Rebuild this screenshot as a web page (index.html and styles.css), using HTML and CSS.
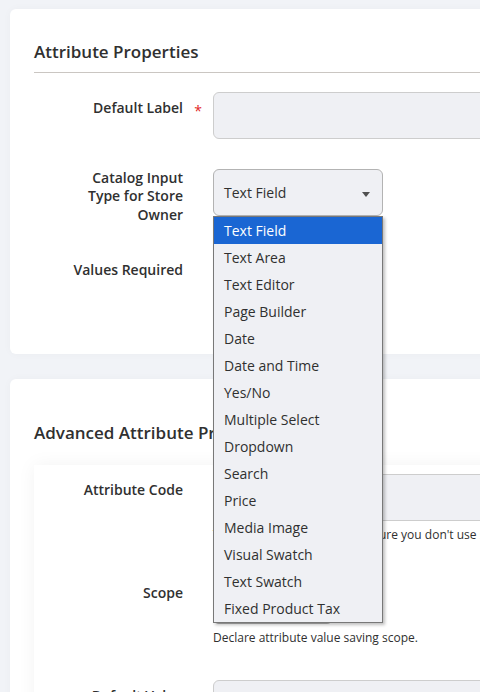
FILE: index.html
```html
<!DOCTYPE html>
<html lang="en">
<head>
    <meta charset="UTF-8">
    <meta name="viewport" content="width=device-width, initial-scale=1.0">
    <title>New Product Attribute</title>
    <link rel="stylesheet" href="styles.css">
</head>
<body>
    <div class="page">
        <!-- Attribute Properties -->
        <section class="card">
            <h2 class="card-title card-title--ruled">Attribute Properties</h2>

            <div class="field">
                <label class="field-label">Default Label</label>
                <span class="field-mark">*</span>
                <div class="field-control">
                    <div class="input"></div>
                </div>
            </div>

            <div class="field">
                <label class="field-label field-label--multiline">Catalog Input Type for Store Owner</label>
                <span class="field-mark"></span>
                <div class="field-control">
                    <div class="select-wrap">
                        <div class="select">Text Field<span class="caret"></span></div>
                        <ul class="options">
                            <li class="selected">Text Field</li>
                            <li>Text Area</li>
                            <li>Text Editor</li>
                            <li>Page Builder</li>
                            <li>Date</li>
                            <li>Date and Time</li>
                            <li>Yes/No</li>
                            <li>Multiple Select</li>
                            <li>Dropdown</li>
                            <li>Search</li>
                            <li>Price</li>
                            <li>Media Image</li>
                            <li>Visual Swatch</li>
                            <li>Text Swatch</li>
                            <li>Fixed Product Tax</li>
                        </ul>
                    </div>
                </div>
            </div>

            <div class="field">
                <label class="field-label">Values Required</label>
                <span class="field-mark"></span>
                <div class="field-control">
                    <div class="select">No<span class="caret"></span></div>
                </div>
            </div>
        </section>

        <!-- Advanced Attribute Properties -->
        <section class="card">
            <h2 class="card-title card-title--collapsible">Advanced Attribute Properties</h2>

            <div class="panel">
                <div class="field">
                    <label class="field-label">Attribute Code</label>
                    <span class="field-mark"></span>
                    <div class="field-control">
                        <div class="input"></div>
                        <div class="note">This is used internally. Make sure you don't use spaces or more than 60 symbols.</div>
                    </div>
                </div>

                <div class="field">
                    <label class="field-label">Scope</label>
                    <span class="field-mark"></span>
                    <div class="field-control">
                        <div class="select select--small">Store View<span class="caret"></span></div>
                        <div class="note">Declare attribute value saving scope.</div>
                    </div>
                </div>

                <div class="field">
                    <label class="field-label">Default Value</label>
                    <span class="field-mark"></span>
                    <div class="field-control">
                        <div class="input"></div>
                    </div>
                </div>
            </div>
        </section>
    </div>
</body>
</html>
```

FILE: styles.css
```css
body {
    margin: 0;
    background-color: #f1f3f7;
    font-family: 'Open Sans', 'Liberation Sans', sans-serif;
    color: #303030;
    overflow: hidden;
}

.page {
    width: 980px;
    padding: 9px 0 40px 10px;
}

/* Cards */
.card {
    background-color: #fff;
    border-radius: 6px;
    padding: 31px 0 23px 24px;
    margin-bottom: 25px;
    box-shadow: 0 0 8px rgba(0, 0, 0, 0.03);
}

.card-title {
    margin: 0;
    font-size: 17px;
    font-weight: 600;
    line-height: 24px;
    color: #303030;
}

.card-title--ruled {
    padding-bottom: 8px;
    border-bottom: 1px solid #cac6c2;
    margin-bottom: 19px;
}

.card-title--collapsible {
    margin-top: 11px;
    margin-bottom: 20px;
}

.panel {
    background-color: #fff;
    padding-top: 9px;
    box-shadow: 0 0 18px rgba(0, 0, 0, 0.05);
}

/* Form rows */
.field {
    display: grid;
    grid-template-columns: 120px 30px 1fr;
    padding-left: 29px;
    margin-bottom: 30px;
}

.field-label {
    font-size: 14px;
    font-weight: 600;
    line-height: 18px;
    padding-top: 7px;
    text-align: right;
}

.field-label--multiline {
    padding-top: 0;
    line-height: 18.4px;
}

.field-mark {
    color: #e22626;
    font-size: 14px;
    line-height: 18px;
    padding-top: 10px;
    text-align: center;
}

.input {
    height: 47px;
    box-sizing: border-box;
    background-color: #eff0f4;
    border: 1px solid #cdcdcd;
    border-radius: 6px;
}

.note {
    font-size: 12px;
    line-height: 17px;
    margin-top: 5px;
    margin-bottom: 4px;
    white-space: nowrap;
}

/* Select */
.select-wrap {
    position: relative;
    width: 170px;
}

.select {
    position: relative;
    width: 170px;
    height: 47px;
    box-sizing: border-box;
    background-color: #eff0f4;
    border: 1px solid #b3b3b3;
    border-radius: 6px;
    padding-left: 10px;
    font-size: 14px;
    line-height: 45px;
}

.select--small {
    width: 120px;
}

.caret {
    position: absolute;
    right: 12px;
    top: 22px;
    width: 0;
    height: 0;
    border-left: 4px solid transparent;
    border-right: 4px solid transparent;
    border-top: 5px solid #505050;
}

.options {
    position: absolute;
    top: 100%;
    left: 0;
    z-index: 10;
    width: 170px;
    box-sizing: border-box;
    margin: 0;
    padding: 0;
    list-style: none;
    background-color: #eff0f4;
    border: 1px solid #787878;
    box-shadow: 2px 2px 3px rgba(0, 0, 0, 0.25);
}

.options li {
    height: 27px;
    line-height: 27px;
    padding-left: 10px;
    font-size: 14px;
    color: #303030;
}

.options li.selected {
    background-color: #1a66d3;
    color: #fff;
}
```
